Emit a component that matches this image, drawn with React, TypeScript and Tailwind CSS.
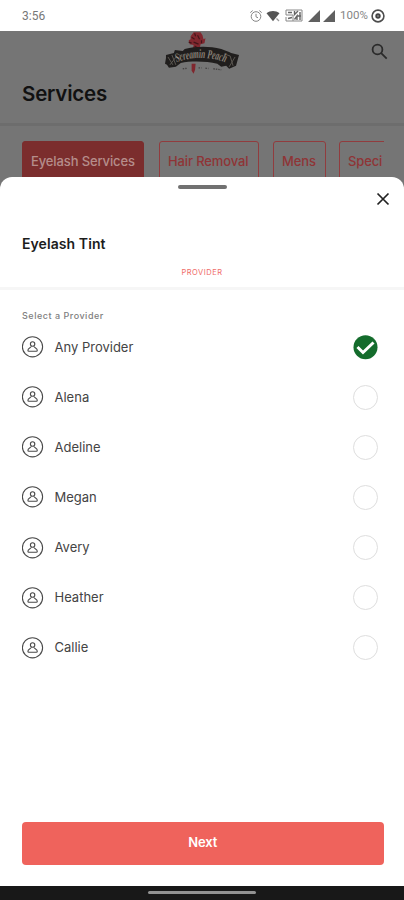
import { useState } from 'react';

const CATEGORIES = ['Eyelash Services', 'Hair Removal', 'Mens', 'Speci'];

const CATEGORY_STYLES = [
  'w-[122px] border-[#7b2d2d] bg-[#7b2d2d] text-[#b58d8b]',
  'ml-[15px] w-[100px] border-[#913c3e] text-[#8f3436]',
  'ml-[14px] w-[53px] border-[#913c3e] text-[#8f3436]',
  'ml-[13px] w-[60px] border-[#913c3e] text-[#8f3436]',
];

const PROVIDERS = ['Any Provider', 'Alena', 'Adeline', 'Megan', 'Avery', 'Heather', 'Callie'];

function StatusBar() {
  return (
    <div className="flex h-[31px] shrink-0 items-center bg-white pl-[22px] pr-[19px] text-[#777]">
      <span className="font-[Roboto] text-[12px] leading-none">3:56</span>
      <svg className="ml-auto" width="14" height="14" viewBox="0 0 14 14" fill="none" stroke="#858585" strokeWidth="1">
        <circle cx="7" cy="7.5" r="4.8" />
        <path d="M7 4.8v3l2 1M1.3 3.6l2.4-2M12.7 3.6l-2.4-2" />
      </svg>
      <svg className="ml-[3px]" width="14" height="12" viewBox="0 0 14 12">
        <path d="M.5 3.2C4.3.2 9.7.2 13.5 3.2L7 11.3z" fill="#555" />
        <path d="M10.5 8.5l2.5 2.5" stroke="#999" strokeWidth="1.2" />
      </svg>
      <svg className="ml-[5px]" width="18" height="13" viewBox="0 0 18 13" fill="none" stroke="#666">
        <path d="M1 1h16v11H8M1 1v5h7v6H1V8" stroke="#888" />
        <path d="M3 3.5h4M9.5 2v3.5L13 2M3 9.5l4-1M9.5 10.5L12 7v4M15 3v8M12.5 7H16" strokeWidth="1.4" />
      </svg>
      <svg className="ml-[5px]" width="27" height="12" viewBox="0 0 27 12" fill="#606060">
        <path d="M0 12L12 0v12zM15 12L27 0v12z" />
      </svg>
      <span className="ml-[5px] w-[31px] whitespace-nowrap font-[Roboto] text-[11.5px] leading-none text-[#858585]">100%</span>
      <svg width="14" height="14" viewBox="0 0 14 14" fill="none" stroke="#4d4d4d">
        <circle cx="7" cy="7" r="5.9" strokeWidth="1.6" />
        <circle cx="7" cy="7" r="2.7" fill="#444" stroke="none" />
        <path d="M7 6v2" stroke="#bbb" strokeWidth=".8" />
      </svg>
    </div>
  );
}

function Logo() {
  return (
    <svg width="75" height="46" viewBox="0 0 76 46">
      <path d="M26 5l3-4h7l2 3 1 4 2-1-1 5-4 1-1 6h-7l1-5-4-1-1-4 2-1z" fill="#80272e" />
      <path d="M27 6l3 2M33 4l2 4M29 11l5 2M30 2l1 3M24 11l3 1M37 9v3M30 15l3 2" stroke="#42161a" strokeWidth="1.2" />
      <path d="M1 24l8-2 1-3 8 1 2-2c12-3 25-3 37 0l8 3 2 1 8 2-3 11-7 3-3-3-5 1-4-3c-11-3-27-3-37-1l-5 4-7 1-2-3-2-1 1-6z" fill="#201e1d" />
      <path d="M3 26l5 8M7 24l4 10M5 34l7-9M66 25l3 10M71 26l-6 10M13 23l5 3M60 23l6 2" stroke="#5c5852" strokeWidth="1" />
      <path id="banner" d="M12 31.500c15-6 35-6 50 .5" fill="none" />
      <text
        fontFamily="Liberation Serif"
        fontStyle="italic"
        fontWeight="700"
        fontSize="13"
        fill="#a29a8d"
        stroke="#28231e"
        strokeWidth=".3"
      >
        <textPath href="#banner" textLength="50" lengthAdjust="spacingAndGlyphs">Screamin Peach</textPath>
      </text>
      <path d="M27 33h4l-.5 6-1.5 4-2-3z" fill="#80272e" />
      <path d="M18 38l4-.5M34 37h3M41 37.5l3 .2M49 38l8 1" stroke="#454343" strokeWidth="1.4" strokeDasharray="1.5 1" />
    </svg>
  );
}

function PersonIcon() {
  return (
    <svg width="22" height="22" viewBox="0 0 22 22" fill="none" stroke="#4a4a4a" strokeWidth="1.1">
      <circle cx="10.5" cy="10.8" r="10.1" />
      <circle cx="10.6" cy="8" r="2.2" />
      <path d="M9.3 10.1c.2 1.7-3.4 1.5-3.4 4.2 0 .7.3 1 1 1h7.4c.7 0 1-.3 1-1 0-2.7-3.6-2.5-3.4-4.2" />
    </svg>
  );
}

function ProviderRow({ name, selected, onSelect }: { name: string; selected: boolean; onSelect: () => void }) {
  return (
    <button
      type="button"
      role="radio"
      aria-checked={selected}
      onClick={onSelect}
      className="flex h-[50.15px] w-full items-center pl-[22px] pr-[26px] text-left"
    >
      <PersonIcon />
      <span className="ml-[10.5px] text-[13px] leading-none text-[#444]">{name}</span>
      {selected ? (
        <svg className="ml-auto" width="25" height="25" viewBox="0 0 25 25">
          <circle cx="12.5" cy="12.2" r="12" fill="#146c2c" />
          <path d="M4.500 12l5.500 5.500L20.500 7.500" fill="none" stroke="#fff" strokeWidth="3" />
        </svg>
      ) : (
        <span className="ml-auto size-[25px] rounded-full border-[1.5px] border-[#dedede]" />
      )}
    </button>
  );
}

export default function App() {
  const [provider, setProvider] = useState('Any Provider');

  return (
    <div className="relative flex h-[900px] w-[404px] flex-col overflow-hidden bg-[#757575] font-[Inter,sans-serif]">
      <StatusBar />
      <header className="h-[92px] shrink-0">
        <div className="flex h-[46px] justify-end pr-[16px]">
          <div className="mr-[131px]">
            <Logo />
          </div>
          <svg className="mt-[12px]" width="17" height="17" viewBox="0 0 17 17" fill="none" stroke="#2a2a2a" strokeWidth="1.8">
            <circle cx="6.5" cy="6.5" r="4.9" />
            <path d="M10.2 10.2l5.5 5.5" />
          </svg>
        </div>
        <h1 className="pl-[22px] pt-[3px] text-[20.5px] font-semibold leading-[28px] tracking-[-0.2px] text-[#111]">Services</h1>
      </header>
      <div className="h-[3px] shrink-0 bg-[#6d6d6d]" />
      <nav className="ml-[22px] mr-[20px] mt-[15px] flex h-[50px] shrink-0 overflow-hidden">
        {CATEGORIES.map((label, i) => (
          <div
            key={label}
            className={`h-[42px] shrink-0 whitespace-nowrap rounded-[3px] border pl-[8px] text-[13px] font-medium leading-[39px] tracking-[-0.12px] ${CATEGORY_STYLES[i]}`}
          >
            {label}
          </div>
        ))}
      </nav>

      <section className="absolute inset-x-0 bottom-[14px] top-[177px] flex flex-col rounded-t-[12px] bg-white">
        <div className="mx-auto mt-[8px] h-[4px] w-[49px] shrink-0 rounded-full bg-[#717171]" />
        <button type="button" aria-label="Close" className="ml-auto mr-[14px] mt-[3px] shrink-0">
          <svg width="14" height="14" viewBox="0 0 14 14" stroke="#222" strokeWidth="1.7">
            <path d="M1.5 1.5l11 11M12.5 1.5l-11 11" />
          </svg>
        </button>
        <h2 className="mt-[28px] shrink-0 pl-[22px] text-[14px] font-semibold leading-[20px] tracking-[0.08px] text-[#1c1c1c]">Eyelash Tint</h2>
        <div className="mt-[14px] h-[10px] shrink-0 text-center text-[7.5px] leading-[10px] tracking-[0.5px] text-[#ef6c68]">PROVIDER</div>
        <div className="mt-[9px] h-[3px] shrink-0 bg-[#f6f6f6]" />
        <p className="mt-[20px] h-[12px] shrink-0 pl-[22px] text-[9px] font-medium leading-[12px] tracking-[0.52px] text-[#808080]">Select a Provider</p>
        <div role="radiogroup" className="flex flex-col">
          {PROVIDERS.map((name) => (
            <ProviderRow key={name} name={name} selected={name === provider} onSelect={() => setProvider(name)} />
          ))}
        </div>
        <button
          type="button"
          className="mb-[21.5px] ml-[22px] mr-[20.5px] mt-auto h-[43px] shrink-0 rounded-[4px] bg-[#ef635c] text-[13px] font-semibold tracking-[-0.1px] text-white"
        >
          Next
        </button>
      </section>

      <div className="mt-auto flex h-[14px] shrink-0 justify-center bg-[#181818] pt-[5px]">
        <div className="h-[3px] w-[108px] rounded-full bg-[#929292]" />
      </div>
    </div>
  );
}
